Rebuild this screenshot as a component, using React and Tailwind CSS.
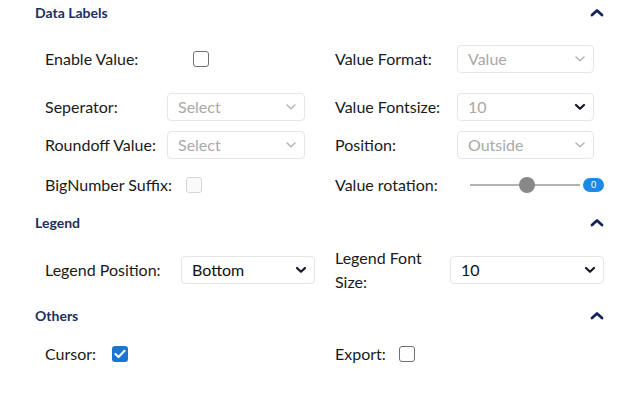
import React from "react";

// small chevron used inside the selects
function Chevron({ tone = "muted" }) {
  const cls =
    tone === "dark"
      ? "stroke-[#16182a] [stroke-width:2.2]"
      : "stroke-[#b4b4b4] [stroke-width:1.5]";
  return (
    <svg width="12" height="8" viewBox="0 0 12 8" className="shrink-0 mr-[1px]">
      <polyline points="2,2 6,5.8 10,2" fill="none" className={cls} strokeLinecap="round" strokeLinejoin="round" />
    </svg>
  );
}

function SectionHeader({ title, mt }) {
  return (
    <div className={`flex items-center justify-between h-6 pl-[35px] pr-[22px] ${mt}`}>
      <span className="text-[14px] font-bold text-[#1c2f5f]">{title}</span>
      <svg width="14" height="9" viewBox="0 0 14 9">
        <polyline points="2,7 7,2.5 12,7" fill="none" stroke="#13245a" strokeWidth="2.8" strokeLinecap="round" strokeLinejoin="round" />
      </svg>
    </div>
  );
}

function Select({ value, width, disabled = true, valueMuted, chevron }) {
  const textColor = disabled || valueMuted ? "text-[#a9a9a9]" : "text-[#111]";
  return (
    <div
      className={`${width} h-[28px] flex items-center justify-between pl-[10px] pr-[6px] rounded-[4px] border border-[#e6e6e6] bg-white ${textColor}`}
    >
      <span className="text-[16px]">{value}</span>
      <Chevron tone={chevron || (disabled ? "muted" : "dark")} />
    </div>
  );
}

function Checkbox({ checked, disabled }) {
  if (checked) {
    return (
      <div className="w-4 h-4 rounded-[3px] bg-[#1976d2] flex items-center justify-center">
        <svg width="12" height="10" viewBox="0 0 12 10">
          <polyline points="1.5,5 4.5,8 10.5,1.8" fill="none" stroke="white" strokeWidth="2.2" strokeLinecap="round" strokeLinejoin="round" />
        </svg>
      </div>
    );
  }
  return (
    <div
      className={`w-4 h-4 rounded-[3px] border-[1.5px] ${
        disabled ? "border-[#d6d6d6] bg-[#fafafa]" : "border-[#6f6f6f] bg-white"
      }`}
    />
  );
}

function Label({ children, className = "" }) {
  return <span className={`text-[16px] leading-6 text-[#1a1a1a] ${className}`}>{children}</span>;
}

export default function App() {
  return (
    <div className="w-[626px] h-[399px] bg-white font-['Lato','Liberation_Sans',sans-serif] overflow-hidden">
      {/* DATA LABELS ---------------------------------------------- */}
      <SectionHeader title="Data Labels" mt="mt-0" />

      <div className="grid grid-cols-[290px_1fr] pl-[45px] pr-[22px]">
        {/* row 1 */}
        <div className="h-9 mt-[17px] flex items-center">
          <Label className="w-[148px]">Enable Value:</Label>
          <Checkbox />
        </div>
        <div className="h-9 mt-[17px] flex items-center">
          <Label className="w-[122px]">Value Format:</Label>
          <div className="-mt-[1px]">
            <Select value="Value" width="w-[137px]" />
          </div>
        </div>

        {/* row 2 */}
        <div className="h-9 mt-[12px] flex items-center">
          <Label className="w-[122px]">Seperator:</Label>
          <Select value="Select" width="w-[138px]" />
        </div>
        <div className="h-9 mt-[12px] flex items-center">
          <Label className="w-[122px]">Value Fontsize:</Label>
          <Select value="10" width="w-[137px]" valueMuted chevron="dark" />
        </div>

        {/* row 3 */}
        <div className="h-9 mt-[2px] flex items-center">
          <Label className="w-[122px]">Roundoff Value:</Label>
          <Select value="Select" width="w-[138px]" />
        </div>
        <div className="h-9 mt-[2px] flex items-center">
          <Label className="w-[122px]">Position:</Label>
          <Select value="Outside" width="w-[137px]" />
        </div>

        {/* row 4 */}
        <div className="h-9 mt-[4px] flex items-center">
          <Label className="w-[141px]">BigNumber Suffix:</Label>
          <Checkbox disabled />
        </div>
        <div className="h-9 mt-[4px] flex items-center">
          <Label className="w-[135px]">Value rotation:</Label>
          <div className="relative w-[135px] h-5 flex items-center">
            <div className="w-[110px] h-[2px] bg-[#b3b3b3]" />
            <div className="absolute left-[49px] top-[2px] w-4 h-4 rounded-full bg-[#888]" />
            <div className="absolute left-[113px] top-[3px] w-[21px] h-[14px] rounded-full bg-[#1e88e5] text-white text-[9px] leading-[14px] text-center">
              0
            </div>
          </div>
        </div>
      </div>

      {/* LEGEND --------------------------------------------------- */}
      <SectionHeader title="Legend" mt="mt-[7px]" />

      <div className="grid grid-cols-[290px_1fr] pl-[45px] pr-[22px] mt-[12px]">
        <div className="h-12 flex items-center">
          <Label className="w-[136px]">Legend Position:</Label>
          <Select value="Bottom" width="w-[134px]" disabled={false} />
        </div>
        <div className="h-12 flex items-center">
          <Label className="w-[115px]">
            Legend Font
            <br />
            Size:
          </Label>
          <Select value="10" width="w-[154px]" disabled={false} />
        </div>
      </div>

      {/* OTHERS --------------------------------------------------- */}
      <SectionHeader title="Others" mt="mt-[9px]" />

      <div className="grid grid-cols-[290px_1fr] pl-[45px] pr-[22px] mt-[9px]">
        <div className="h-9 flex items-center">
          <Label className="w-[67px]">Cursor:</Label>
          <Checkbox checked />
        </div>
        <div className="h-9 flex items-center">
          <Label className="w-[64px]">Export:</Label>
          <Checkbox />
        </div>
      </div>
    </div>
  );
}
